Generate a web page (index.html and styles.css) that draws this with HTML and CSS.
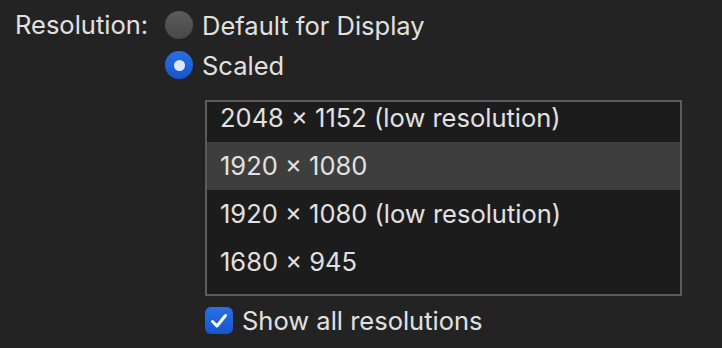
FILE: index.html
```html
<!DOCTYPE html>
<html lang="en">
<head>
<meta charset="UTF-8">
<title>Resolution</title>
<link rel="stylesheet" href="styles.css">
</head>
<body>

<div class="pane">
  <div class="pane-label">Resolution:</div>
  <div class="pane-options">
    <div class="radio-row">
      <span class="radio"></span>
      <span class="opt-text">Default for Display</span>
    </div>
    <div class="radio-row">
      <span class="radio radio-on"><span class="radio-dot"></span></span>
      <span class="opt-text">Scaled</span>
    </div>

    <div class="res-list">
      <div class="res-scroll">
        <div class="res-row">2048 × 1152 (low resolution)</div>
        <div class="res-row res-selected">1920 × 1080</div>
        <div class="res-row">1920 × 1080 (low resolution)</div>
        <div class="res-row">1680 × 945</div>
      </div>
    </div>

    <div class="check-row">
      <span class="checkbox">
        <svg width="18" height="16" viewBox="0 0 18 16">
          <path d="M2.5 8.5 L7 13 L15.5 2.5" fill="none" stroke="#fff" stroke-width="3" stroke-linecap="round" stroke-linejoin="round"/>
        </svg>
      </span>
      <span class="opt-text">Show all resolutions</span>
    </div>
  </div>
</div>

</body>
</html>
```

FILE: styles.css
```css
body {
  margin: 0;
  background-color: #232323;
  color: #e1e1e1;
  font-family: Inter, "Noto Sans", sans-serif;
  font-size: 25.5px;
}

.pane {
  display: flex;
  padding-top: 5px;
}

.pane-label {
  width: 132px;
  margin-left: 15px;
  margin-right: 18px;
  height: 40px;
  line-height: 40px;
  text-align: right;
}

.radio-row {
  display: flex;
  align-items: center;
  height: 40px;
}

.radio {
  width: 28px;
  height: 28px;
  border-radius: 50%;
  background: linear-gradient(#5c5c5c, #484848);
  margin-right: 9px;
  display: flex;
  align-items: center;
  justify-content: center;
}

.radio-on {
  background: linear-gradient(#2a6fe6, #1656cc);
}

.radio-dot {
  width: 11px;
  height: 11px;
  border-radius: 50%;
  background-color: #dfe8fa;
}

.res-list {
  margin-top: 15px;
  margin-left: 40px;
  width: 473px;
  height: 192px;
  border: 2px solid #5c5c5c;
  background-color: #1c1c1c;
  overflow: hidden;
}

.res-scroll {
  margin-top: -8px;
}

.res-row {
  height: 48px;
  line-height: 48px;
  padding-left: 13px;
}

.res-selected {
  background-color: #3e3e3e;
}

.check-row {
  display: flex;
  align-items: center;
  margin-top: 11px;
  margin-left: 40px;
  height: 27px;
}

.checkbox {
  width: 28px;
  height: 27px;
  border-radius: 6px;
  background: linear-gradient(#2a6fe6, #1656cc);
  margin-right: 9px;
  display: flex;
  align-items: center;
  justify-content: center;
}
```
